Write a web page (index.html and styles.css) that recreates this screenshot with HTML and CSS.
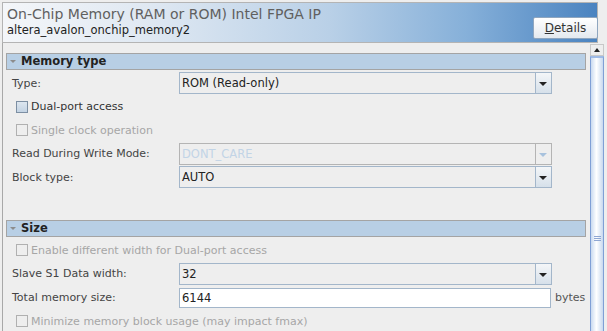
FILE: index.html
```html
<!DOCTYPE html>
<html lang="en">
<head>
  <meta charset="UTF-8">
  <title>On-Chip Memory (RAM or ROM) Intel FPGA IP</title>
  <link rel="stylesheet" href="styles.css">
</head>
<body>
  <div class="header">
    <div class="titles">
      <div class="title">On-Chip Memory (RAM or ROM) Intel FPGA IP</div>
      <div class="subtitle">altera_avalon_onchip_memory2</div>
    </div>
    <button class="details"><u>D</u>etails</button>
  </div>

  <div class="scroll">
    <div class="viewport">
      <div class="section-bar"><span class="tri"></span>Memory type</div>

      <div class="row first">
        <span class="label">Type:</span>
        <div class="combo"><span class="value">ROM (Read-only)</span><span class="arrow"></span></div>
      </div>
      <div class="row check">
        <span class="box"></span><span>Dual-port access</span>
      </div>
      <div class="row check disabled">
        <span class="box"></span><span>Single clock operation</span>
      </div>
      <div class="row">
        <span class="label">Read During Write Mode:</span>
        <div class="combo off"><span class="value">DONT_CARE</span><span class="arrow"></span></div>
      </div>
      <div class="row">
        <span class="label">Block type:</span>
        <div class="combo"><span class="value">AUTO</span><span class="arrow"></span></div>
      </div>

      <div class="section-bar size"><span class="tri"></span>Size</div>

      <div class="row check disabled first">
        <span class="box"></span><span>Enable different width for Dual-port access</span>
      </div>
      <div class="row">
        <span class="label">Slave S1 Data width:</span>
        <div class="combo"><span class="value">32</span><span class="arrow"></span></div>
      </div>
      <div class="row">
        <span class="label">Total memory size:</span>
        <div class="field">6144</div>
        <span class="unit">bytes</span>
      </div>
      <div class="row check disabled">
        <span class="box"></span><span>Minimize memory block usage (may impact fmax)</span>
      </div>
    </div>

    <div class="vbar">
      <div class="up"></div>
      <div class="thumb"><span class="grip"></span></div>
    </div>
  </div>
</body>
</html>
```

FILE: styles.css
```css
* {
  box-sizing: border-box;
}
body {
  margin: 0;
  height: 331px;
  background: #eeeeee;
  font-family: "DejaVu Sans", sans-serif;
  font-size: 11px;
  color: #333333;
  overflow: hidden;
  padding: 2px 3px 0 2px;
}

/* cabecalho com degrade */
.header {
  height: 41px;
  margin-right: 6px;
  border: 1px solid #b4b4b4;
  background: linear-gradient(to right, #f4f6f9 0%, #dfe8f2 25%, #b9d0e7 55%, #86b0d9 78%, #4a83c0 100%);
  display: flex;
  justify-content: space-between;
  align-items: flex-end;
  padding: 0 0 3px 4px;
}
.titles {
  align-self: flex-start;
  padding-top: 3px;
}
.title {
  font-size: 14px;
  color: #606060;
  line-height: 17px;
}
.subtitle {
  font-size: 11.5px;
  color: #222222;
  line-height: 14px;
}
.details {
  width: 65px;
  height: 22px;
  margin-right: -1px;
  font-family: "DejaVu Sans", sans-serif;
  font-size: 12px;
  color: #333333;
  border: 1px solid #8fa6bf;
  border-radius: 2px;
  background: linear-gradient(#ffffff, #e4e9ef);
  padding: 0;
}

.scroll {
  display: flex;
  height: 288px;
  border-left: 1px solid #a8a8a8;
}
.viewport {
  flex: 1;
  padding: 10px 3px 0 3px;
}

.section-bar {
  height: 17px;
  border: 1px solid #a4a4a4;
  background: #b8cfe5;
  font-weight: bold;
  font-size: 11.5px;
  line-height: 15px;
  color: #222222;
  display: flex;
  align-items: center;
}
.section-bar.size {
  margin-top: 32px;
}
.tri {
  width: 0;
  height: 0;
  border-left: 3px solid transparent;
  border-right: 3px solid transparent;
  border-top: 3px solid #8c8c8c;
  margin: 0 5px 0 3px;
}

.row {
  height: 22px;
  margin-top: 1.6px;
  display: flex;
  align-items: center;
  padding-left: 6px;
}
.row.first {
  margin-top: 2px;
}
.label {
  width: 167px;
  color: #444444;
}
.combo {
  width: 373px;
  height: 22px;
  border: 1px solid #a3b6ca;
  display: flex;
  background: #eeeeee;
}
.combo .value {
  flex: 1;
  padding-left: 2px;
  line-height: 20px;
  font-size: 11.5px;
  color: #222222;
}
.combo .arrow {
  width: 16px;
  border-left: 1px solid #a3b6ca;
  background: linear-gradient(#f4f6f8, #d6e0ea);
  position: relative;
}
.combo .arrow::after {
  content: "";
  position: absolute;
  left: 3px;
  top: 9px;
  border-left: 4px solid transparent;
  border-right: 4px solid transparent;
  border-top: 4px solid #222222;
}
.combo.off {
  border-color: #b4b4b4;
}
.combo.off .value {
  color: #c2d4e6;
}
.combo.off .arrow {
  background: #eeeeee;
  border-color: #b4b4b4;
}
.combo.off .arrow::after {
  border-top-color: #a8c2dd;
}

.field {
  width: 372px;
  height: 20px;
  border: 1px solid #a3b6ca;
  background: #ffffff;
  padding-left: 2px;
  line-height: 18px;
  font-size: 11.5px;
  color: #222222;
}
.unit {
  margin-left: 4px;
  color: #555555;
}

.check {
  padding-left: 10px;
  color: #333333;
}
.box {
  width: 12px;
  height: 12px;
  border: 1px solid #7d8fa3;
  background: linear-gradient(#dde6ef, #c3d3e3);
  margin-right: 3px;
}
.check.disabled {
  color: #a6a6a6;
}
.check.disabled .box {
  border-color: #b0b0b0;
  background: #eeeeee;
}

/* barra de rolagem */
.vbar {
  width: 14px;
  margin-left: 1px;
  padding-top: 1px;
}
.up {
  height: 12px;
  border: 1px solid #c8c8c8;
  background: #eeeeee;
  position: relative;
}
.up::after {
  content: "";
  position: absolute;
  left: 3px;
  top: 3px;
  border-left: 3px solid transparent;
  border-right: 3px solid transparent;
  border-bottom: 4px solid #222222;
}
.thumb {
  height: 280px;
  border: 1px solid #7f9fd6;
  border-top: 2px solid #9fbbe6;
  background: linear-gradient(to right, #c9daf0, #ffffff 45%, #c8d9ef);
  position: relative;
}
.grip {
  position: absolute;
  left: 3px;
  top: 178px;
  width: 7px;
  height: 5px;
  border-top: 1px solid #8fa7d3;
  border-bottom: 1px solid #8fa7d3;
}
.grip::after {
  content: "";
  position: absolute;
  left: 0;
  top: 1px;
  width: 7px;
  border-top: 1px solid #8fa7d3;
}
```
